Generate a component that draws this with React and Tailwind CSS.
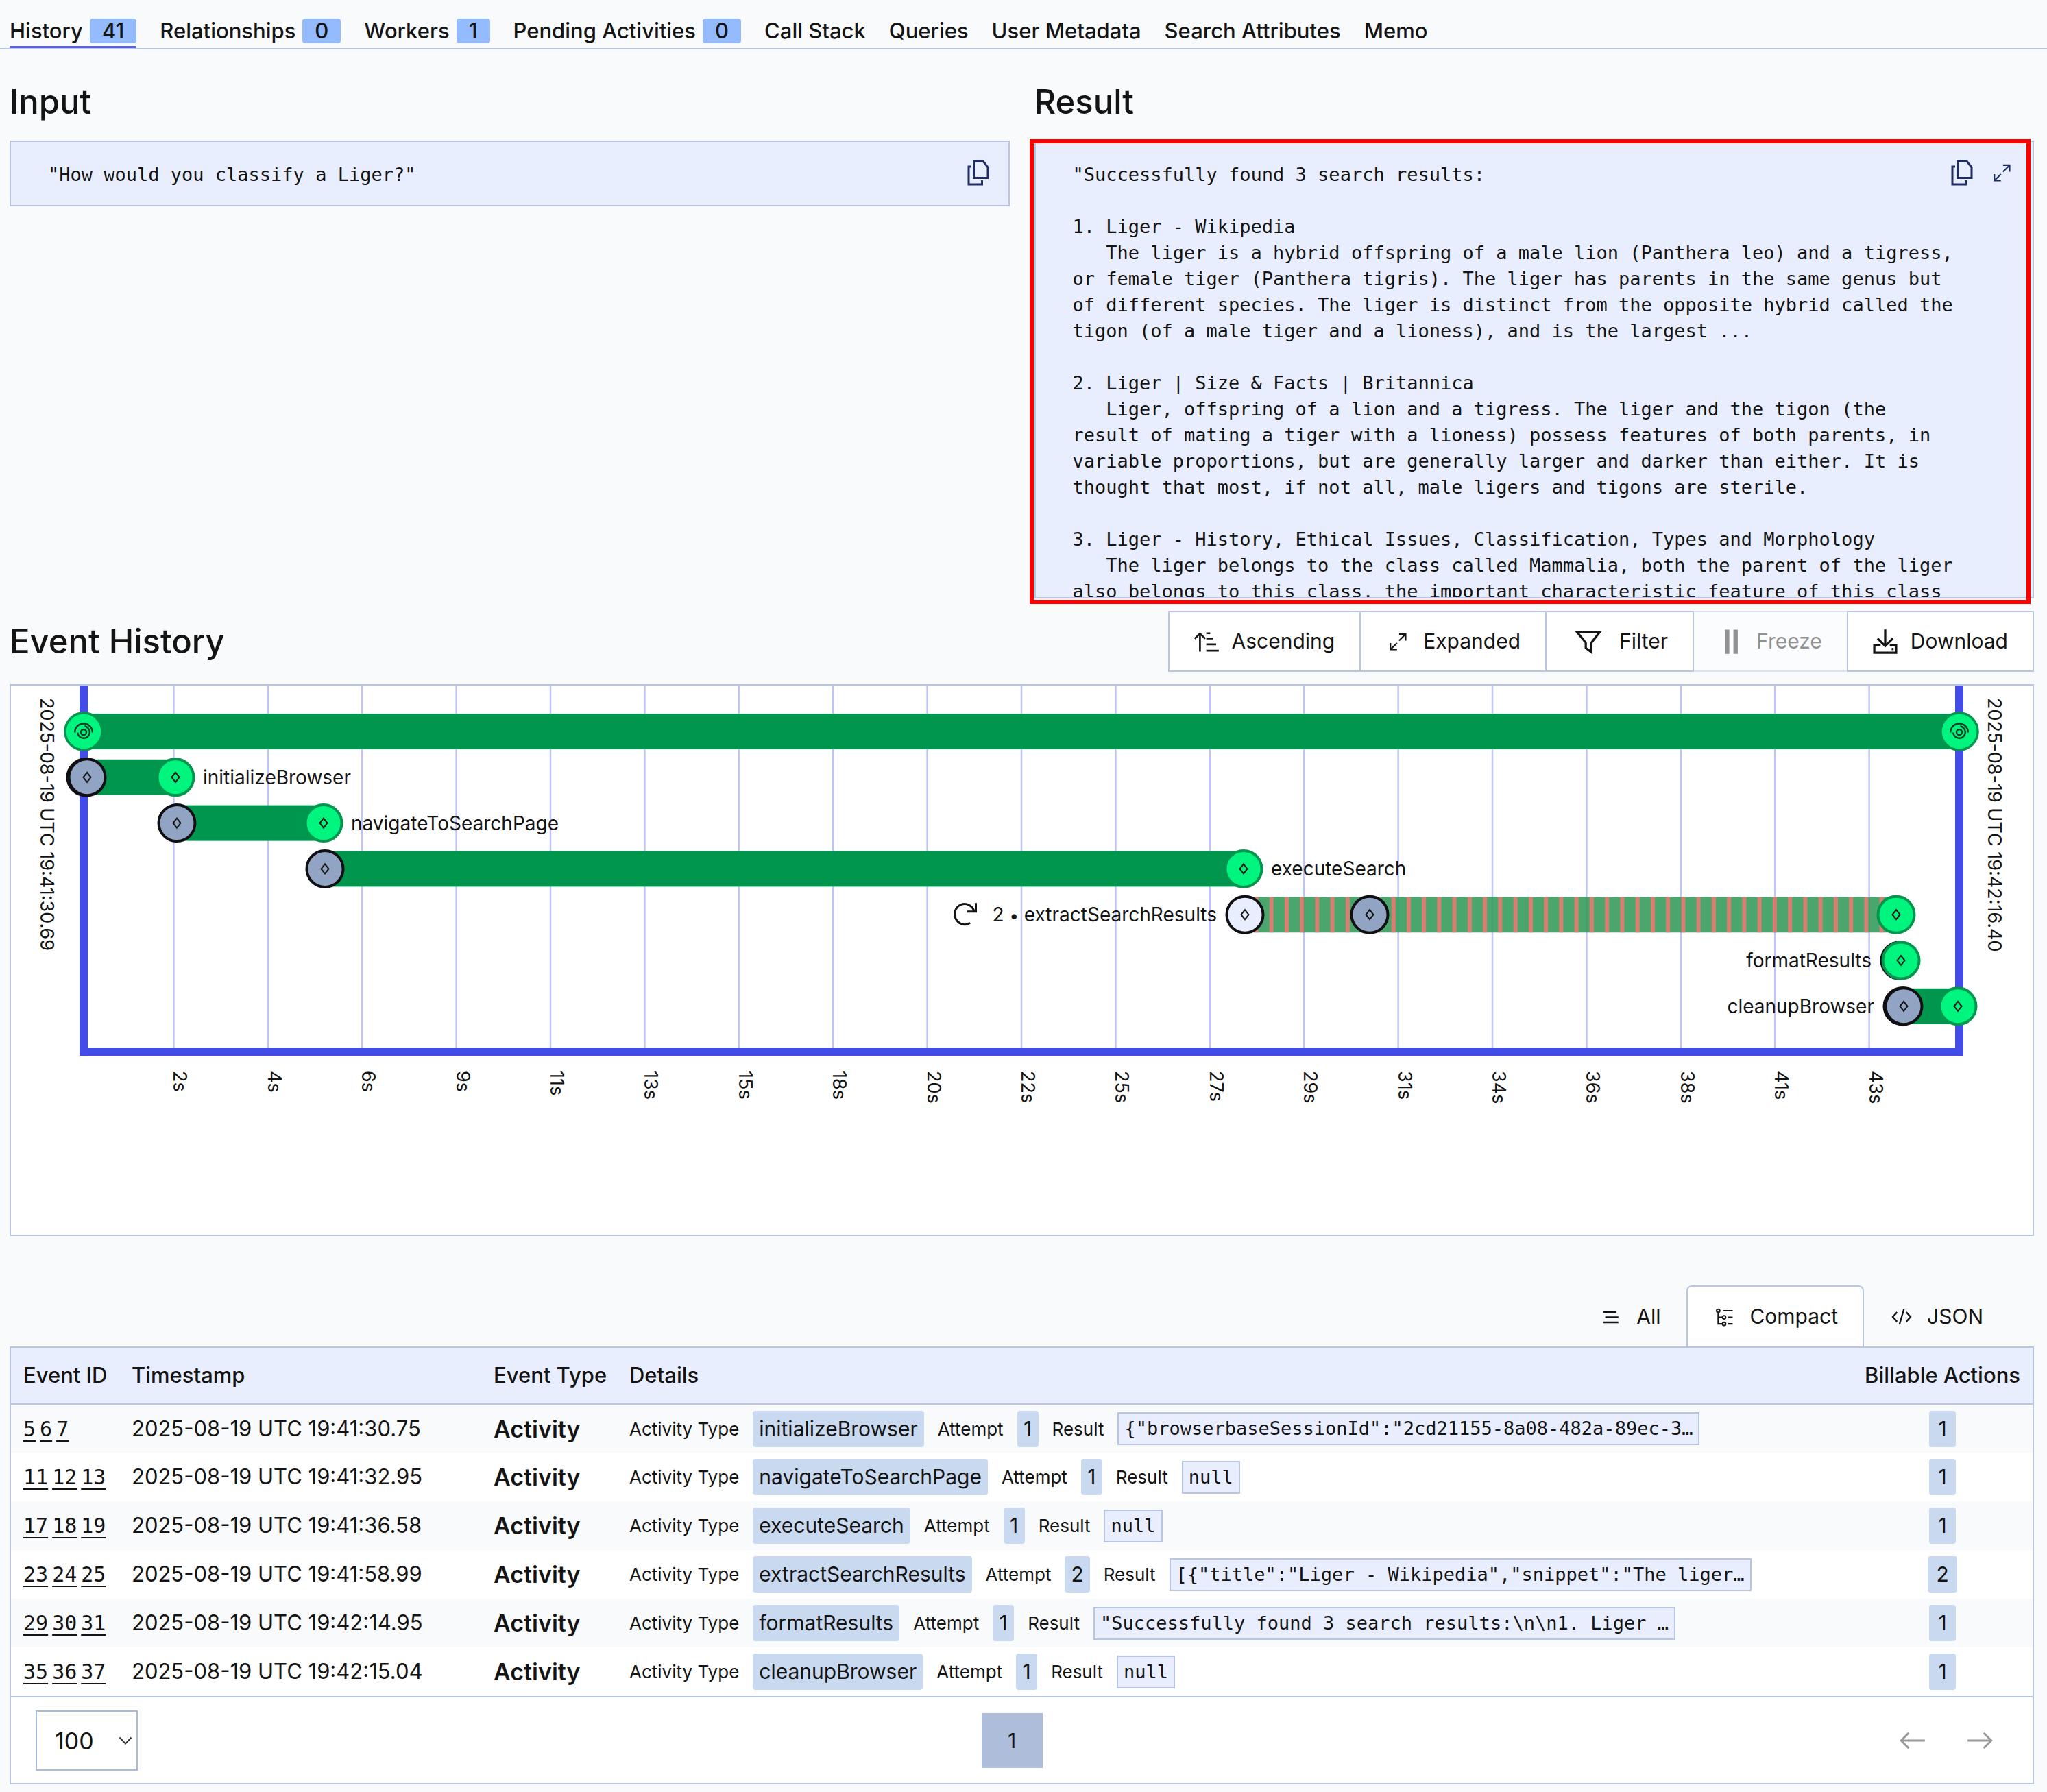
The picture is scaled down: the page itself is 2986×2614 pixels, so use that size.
import { useState } from 'react';
import clsx from 'clsx';

const tabs = [
  { label: 'History', count: 41 },
  { label: 'Relationships', count: 0 },
  { label: 'Workers', count: 1 },
  { label: 'Pending Activities', count: 0 },
  { label: 'Call Stack' },
  { label: 'Queries' },
  { label: 'User Metadata' },
  { label: 'Search Attributes' },
  { label: 'Memo' },
];

const resultText = `"Successfully found 3 search results:

1. Liger - Wikipedia
   The liger is a hybrid offspring of a male lion (Panthera leo) and a tigress,
or female tiger (Panthera tigris). The liger has parents in the same genus but
of different species. The liger is distinct from the opposite hybrid called the
tigon (of a male tiger and a lioness), and is the largest ...

2. Liger | Size & Facts | Britannica
   Liger, offspring of a lion and a tigress. The liger and the tigon (the
result of mating a tiger with a lioness) possess features of both parents, in
variable proportions, but are generally larger and darker than either. It is
thought that most, if not all, male ligers and tigons are sterile.

3. Liger - History, Ethical Issues, Classification, Types and Morphology
   The liger belongs to the class called Mammalia, both the parent of the liger
also belongs to this class, the important characteristic feature of this class`;

const events = [
  { ids: [5, 6, 7], time: '2025-08-19 UTC 19:41:30.75', name: 'initializeBrowser', attempt: 1, result: '{"browserbaseSessionId":"2cd21155-8a08-482a-89ec-3…', billable: 1 },
  { ids: [11, 12, 13], time: '2025-08-19 UTC 19:41:32.95', name: 'navigateToSearchPage', attempt: 1, result: 'null', billable: 1 },
  { ids: [17, 18, 19], time: '2025-08-19 UTC 19:41:36.58', name: 'executeSearch', attempt: 1, result: 'null', billable: 1 },
  { ids: [23, 24, 25], time: '2025-08-19 UTC 19:41:58.99', name: 'extractSearchResults', attempt: 2, result: '[{"title":"Liger - Wikipedia","snippet":"The liger…', billable: 2 },
  { ids: [29, 30, 31], time: '2025-08-19 UTC 19:42:14.95', name: 'formatResults', attempt: 1, result: '"Successfully found 3 search results:\\n\\n1. Liger …', billable: 1 },
  { ids: [35, 36, 37], time: '2025-08-19 UTC 19:42:15.04', name: 'cleanupBrowser', attempt: 1, result: 'null', billable: 1 },
];

const ticks = ['2s', '4s', '6s', '9s', '11s', '13s', '15s', '18s', '20s', '22s', '25s', '27s', '29s', '31s', '34s', '36s', '38s', '41s', '43s'];

const Icon = ({ children, className, strokeWidth = 1.5 }) => (
  <svg
    viewBox="0 0 24 24"
    fill="none"
    stroke="currentColor"
    strokeWidth={strokeWidth}
    className={clsx('h-[46px] w-[46px] shrink-0', className)}
    aria-hidden="true"
  >
    {children}
  </svg>
);

const CopyIcon = () => (
  <svg viewBox="0 0 32 38" fill="none" stroke="currentColor" strokeWidth="3" className="h-[38px] w-[32px]" aria-hidden="true">
    <path d="M9.5 2H23l7 9v15.500H9.500z" />
    <path d="M6 10H2v26h19.500v-6" />
  </svg>
);

const ExpandIcon = () => (
  <Icon strokeWidth={1.1}>
    <path d="M13 6.200h5v5M18 6.200l-5 5M6.400 13v5h5M6.400 18l5-5" />
  </Icon>
);

const AscendingIcon = () => (
  <Icon strokeWidth={1.4}>
    <path d="M7 19.500V5.800M3 9.800l4-4 4 4" />
    <path d="M11.800 5.600h3M11.800 9.600h5.200M11.800 14h7.500M11.800 18.800h9.500" />
  </Icon>
);

const FilterIcon = () => (
  <Icon strokeWidth={1.7}>
    <path d="M3.200 4.500h17.600l-6.500 8.300v7.200L10 16.800v-4z" />
  </Icon>
);

const PauseIcon = () => (
  <Icon strokeWidth={3.3}>
    <path d="M9.100 2.900v18.400M15.500 2.900v18.400" />
  </Icon>
);

const DownloadIcon = () => (
  <Icon strokeWidth={1.7}>
    <path d="M12 2.700v12.500M6.200 9.600l5.800 5.700 5.800-5.700" />
    <path d="M8.500 14.800H3.700v5.600h16.600v-5.600h-4.800" />
    <path d="M16.900 17.600h1.500" />
  </Icon>
);

const ListIcon = () => (
  <Icon strokeWidth={1.3}>
    <path d="M6.200 8.200h9.800M7.600 12.200h10M6.200 16.200h11.400" />
  </Icon>
);

const TreeIcon = () => (
  <Icon strokeWidth={1.1}>
    <circle cx="7.500" cy="7.300" r="1.200" />
    <circle cx="12" cy="12.300" r="1.200" />
    <circle cx="12" cy="17.300" r="1.200" />
    <path d="M7.500 8.500v8.800h3.300M7.500 12.300h3.300M11.300 7.300h7.200M15 12.300h3.500M15 17.300h3.500" />
  </Icon>
);

const CodeIcon = () => (
  <Icon strokeWidth={1.2}>
    <path d="M8.500 8.400 5.200 12l3.300 3.600M15.500 8.400l3.300 3.600-3.300 3.600M13.700 6.200l-3.400 11.600" />
  </Icon>
);

const CountBadge = ({ children }) => (
  <span className="inline-flex h-9 items-center rounded-[4px] bg-[#93bbfd] px-[18px]">{children}</span>
);

const ValueBadge = ({ children, className = 'min-w-[31px] px-[9px]' }) => (
  <span className={clsx('inline-flex h-[53px] items-center justify-center rounded-[4px] bg-[#c9d9f0] text-[30px]', className)}>
    {children}
  </span>
);

const TabBar = () => {
  const [active, setActive] = useState('History');

  return (
    <nav className="border-b-2 border-[#b8c6e2] pt-[27px] pl-[14px]">
      <div className="flex gap-[34px] text-[31px] font-medium">
        {tabs.map((tab) => (
          <button
            key={tab.label}
            type="button"
            onClick={() => setActive(tab.label)}
            className={clsx(
              'flex items-center gap-[10px] border-b-[3px] pb-1 leading-9',
              active === tab.label ? 'border-[#5b63e6]' : 'border-transparent'
            )}
          >
            {tab.label}
            {tab.count !== undefined && <CountBadge>{tab.count}</CountBadge>}
          </button>
        ))}
      </div>
    </nav>
  );
};

const CodePanel = ({ title, text, expandable = false, highlighted = false }) => (
  <section className="min-w-0">
    <h2 className="mb-[25px] text-[49px] leading-[62px] font-medium">{title}</h2>
    <div className="relative">
      <div className="relative max-h-[668px] overflow-hidden border-2 border-[#b8c6e2] bg-[#e8eefe] px-[54px] pt-[29px] pb-[25px]">
        <pre className="font-[DejaVu_Sans_Mono,monospace] text-[27px] leading-[38px]">{text}</pre>
        <div
          className={clsx(
            'absolute top-[26px] flex h-[38px] items-center gap-[7px] text-[#1e2d66]',
            expandable ? 'right-[22px]' : 'right-4'
          )}
        >
          <button type="button" aria-label={`Copy ${title}`} className="px-3">
            <CopyIcon />
          </button>
          {expandable && (
            <button type="button" aria-label={`Expand ${title}`}>
              <ExpandIcon />
            </button>
          )}
        </div>
      </div>
      {highlighted && (
        <div className="pointer-events-none absolute -top-[2px] right-[5px] -bottom-[8px] -left-[7px] border-[6px] border-[#ff0000]" />
      )}
    </div>
  </section>
);

const toolButton = 'flex h-[89px] items-center gap-[14px] border-2 border-[#b8c6e2] bg-white pr-9';

const Toolbar = () => (
  <div className="flex">
    <button type="button" className={clsx(toolButton, 'pl-[31px]')}>
      <AscendingIcon />
      Ascending
    </button>
    <button type="button" className={clsx(toolButton, '-ml-[2px] pl-[31px]')}>
      <ExpandIcon />
      Expanded
    </button>
    <button type="button" className={clsx(toolButton, '-ml-[2px] pl-[38px]')}>
      <FilterIcon />
      <span className="pl-2">Filter</span>
    </button>
    <button type="button" disabled className={clsx(toolButton, 'border-x-0 pl-[31px] opacity-45')}>
      <PauseIcon />
      Freeze
    </button>
    <button type="button" className={clsx(toolButton, 'pl-[31px]')}>
      <DownloadIcon />
      Download
    </button>
  </div>
);

const Diamond = ({ x, y }) => (
  <path d={`M${x} ${y - 7}l5.500 7-5.500 7-5.500-7z`} fill="none" stroke="#141414" strokeWidth="2" />
);

const Dot = ({ x, y, kind = 'done' }) => {
  const colors = {
    done: { fill: '#00f57f', stroke: '#00964e' },
    started: { fill: '#92a4c3', stroke: '#0f0f14' },
    scheduled: { fill: '#e8eefe', stroke: '#0f0f14' },
  }[kind];

  return (
    <g>
      <circle cx={x} cy={y} r="26.500" fill={colors.fill} stroke={colors.stroke} strokeWidth="4" />
      <Diamond x={x} y={y} />
    </g>
  );
};

const WorkflowDot = ({ x, y }) => (
  <g>
    <circle cx={x} cy={y} r="27" fill="#00f57f" stroke="#00964e" strokeWidth="3.500" />
    <g transform={`translate(${x} ${y})`} fill="none" stroke="#0a3d22" strokeWidth="2.400">
      <circle cx="0" cy="1" r="4" />
      <path d="M-12.800 1.500C-12.800 -6 -7 -11.500 0 -11.500S12.800 -6 12.800 1.500" />
      <path d="M-8.800 1.500A8.800 8.800 0 1 0 1.500 -7.700" />
    </g>
  </g>
);

const Bar = ({ from, to, y }) => (
  <rect x={from} y={y - 26} width={to - from} height="52" fill="#00964e" />
);

const rowY = (i) => 67 + i * 66.8;

const Timeline = () => (
  <div className="mt-[18px] border-2 border-[#b8c6e2] bg-white">
    <svg viewBox="0 0 2949 801" className="h-auto w-full font-[Inter,sans-serif] text-[28px]" fill="#141414" role="img" aria-label="Event timeline">
      {ticks.map((tick, i) => {
        const x = 100 + (i + 1) * 137.4;
        return (
          <g key={tick}>
            <line x1={x} x2={x} y1="0" y2="528" stroke="#c0c3f8" strokeWidth="2.500" />
            <text transform={`translate(${x} 562) rotate(90)`} className="text-[27px]">{tick}</text>
          </g>
        );
      })}
      <path d="M106 0V534H2842V0" fill="none" stroke="#444ce7" strokeWidth="12" />
      <text transform="translate(43 18) rotate(90)" className="text-[27px]">2025-08-19 UTC 19:41:30.69</text>
      <text transform="translate(2884 18) rotate(90)" className="text-[27px]">2025-08-19 UTC 19:42:16.40</text>

      <Bar from={106} to={2842} y={rowY(0)} />
      <WorkflowDot x={106} y={rowY(0)} />
      <WorkflowDot x={2842} y={rowY(0)} />

      <Bar from={111} to={240} y={rowY(1)} />
      <Dot x={109} y={rowY(1)} kind="started" />
      <Dot x={111} y={rowY(1)} kind="started" />
      <Dot x={240} y={rowY(1)} />
      <text x="280" y={rowY(1) + 10}>initializeBrowser</text>

      <Bar from={242} to={456} y={rowY(2)} />
      <Dot x={242} y={rowY(2)} kind="started" />
      <Dot x={456} y={rowY(2)} />
      <text x="496" y={rowY(2) + 10}>navigateToSearchPage</text>

      <Bar from={458} to={1798} y={rowY(3)} />
      <Dot x={458} y={rowY(3)} kind="started" />
      <Dot x={1798} y={rowY(3)} />
      <text x="1838" y={rowY(3) + 10}>executeSearch</text>

      {/* retried activity */}
      <g opacity="0.9" fill="none" strokeWidth="52">
        <line x1="1800" x2="2750" y1={rowY(4)} y2={rowY(4)} stroke="#379d5e" />
        <line x1="1813.400" x2="2750" y1={rowY(4)} y2={rowY(4)} stroke="#d57263" strokeDasharray="6 16.25" />
      </g>
      <Dot x={1800} y={rowY(4)} kind="scheduled" />
      <Dot x={1982} y={rowY(4)} kind="started" />
      <Dot x={2750} y={rowY(4)} />
      <path
        d={`M1405 ${rowY(4) - 5}A14.500 15 0 1 0 1399 ${rowY(4) + 12}M1407.500 ${rowY(4) - 17}V${rowY(4) - 4.5}H1395`}
        fill="none"
        stroke="#141414"
        strokeWidth="3"
      />
      <text x="1759" y={rowY(4) + 10} textAnchor="end">
        2 <tspan className="text-[24px]">•</tspan> extractSearchResults
      </text>

      <Dot x={2755} y={rowY(5)} kind="started" />
      <Dot x={2757} y={rowY(5)} />
      <text x="2714" y={rowY(5) + 10} textAnchor="end">formatResults</text>

      <Bar from={2761} to={2840} y={rowY(6)} />
      <Dot x={2759} y={rowY(6)} kind="started" />
      <Dot x={2761} y={rowY(6)} kind="started" />
      <Dot x={2840} y={rowY(6)} />
      <text x="2718" y={rowY(6) + 10} textAnchor="end">cleanupBrowser</text>
    </svg>
  </div>
);

const ViewTabs = () => {
  const [view, setView] = useState('Compact');
  const views = [
    { label: 'All', icon: <ListIcon /> },
    { label: 'Compact', icon: <TreeIcon /> },
    { label: 'JSON', icon: <CodeIcon /> },
  ];

  return (
    <div className="mt-[72px] flex justify-end pr-9">
      {views.map(({ label, icon }) => (
        <button
          key={label}
          type="button"
          onClick={() => setView(label)}
          className={clsx(
            'flex h-[89px] items-center gap-[14px] rounded-t-lg border-2 border-b-0 pr-9 pl-[30px]',
            view === label ? 'border-[#b8c6e2] bg-white' : 'border-transparent'
          )}
        >
          {icon}
          {label}
        </button>
      ))}
    </div>
  );
};

const EventTable = () => (
  <div className="border-2 border-[#b8c6e2] bg-white">
    <table className="w-full border-collapse text-left whitespace-nowrap">
      <thead className="text-[31px]">
        <tr className="h-[82px] border-b-2 border-[#b8c6e2] bg-[#e8eefe]">
          <th className="w-[158px] pl-[18px] font-medium">Event ID</th>
          <th className="w-[528px] pl-[18px] font-medium">Timestamp</th>
          <th className="w-[198px] pl-[18px] font-medium">Event Type</th>
          <th className="pl-[18px] font-medium">Details</th>
          <th className="w-[260px] px-[18px] text-center font-medium">Billable Actions</th>
        </tr>
      </thead>
      <tbody>
        {events.map((event) => (
          <tr key={event.time} className="h-[71px] odd:bg-[#f9fafc]">
            <td className="pl-[18px]">
              <div className="flex gap-[6px] font-[DejaVu_Sans_Mono,monospace]">
                {event.ids.map((id) => (
                  <a key={id} href={`#event-${id}`} className="underline decoration-2 underline-offset-[6px]">
                    {id}
                  </a>
                ))}
              </div>
            </td>
            <td className="pl-[18px] text-[31px]">{event.time}</td>
            <td className="pl-[18px] text-[34px] font-semibold">Activity</td>
            <td className="pl-[18px]">
              <div className="flex items-center gap-5 text-[26px]">
                <span>Activity Type</span>
                <ValueBadge>{event.name}</ValueBadge>
                <span>Attempt</span>
                <ValueBadge>{event.attempt}</ValueBadge>
                <span>Result</span>
                <code className="border-2 border-[#b8c6e2] bg-[#e8eefe] px-2 font-[DejaVu_Sans_Mono,monospace] text-[27px] leading-[44px]">
                  {event.result}
                </code>
              </div>
            </td>
            <td className="px-[18px] text-center">
              <ValueBadge className="min-w-[39px] px-3">{event.billable}</ValueBadge>
            </td>
          </tr>
        ))}
      </tbody>
    </table>

    <div className="flex items-center justify-between border-t-2 border-[#b8c6e2] pt-[19px] pr-[38px] pb-[18px] pl-9">
      <div className="relative">
        <select
          aria-label="Rows per page"
          defaultValue="100"
          className="h-[88px] w-[149px] appearance-none border-2 border-[#a9bbde] bg-white pl-[26px] text-[34px]"
        >
          <option value="100">100</option>
          <option value="250">250</option>
          <option value="500">500</option>
        </select>
        <svg viewBox="0 0 20 12" fill="none" stroke="#333" strokeWidth="2" className="pointer-events-none absolute top-[38px] right-2 h-3 w-5" aria-hidden="true">
          <path d="m1.500 1.500 8.500 9 8.500-9" />
        </svg>
      </div>
      <button type="button" aria-current="page" className="h-20 w-[89px] bg-[#aebdd9]">1</button>
      <div className="flex gap-5 text-[#999]">
        <button type="button" aria-label="Previous page" className="px-4">
          <Icon><path d="M21.300 12H3.500M9 6.200 3.200 12 9 17.800" /></Icon>
        </button>
        <button type="button" aria-label="Next page" className="px-4">
          <Icon><path d="M2.700 12h17.800M15 6.200l5.800 5.800-5.800 5.800" /></Icon>
        </button>
      </div>
    </div>
  </div>
);

export default function App() {
  return (
    <div className="min-h-screen bg-[#f9fafc] font-[Inter,sans-serif] text-[30px] text-[#141414]">
      <TabBar />
      <main className="pr-[19px] pb-3 pl-[14px]">
        <div className="grid grid-cols-2 items-start gap-9 pt-[46px]">
          <CodePanel title="Input" text={'"How would you classify a Liger?"'} />
          <CodePanel title="Result" text={resultText} expandable highlighted />
        </div>
        <div className="mt-[18px] flex items-center justify-between">
          <h2 className="text-[49px] leading-[62px] font-medium">Event History</h2>
          <Toolbar />
        </div>
        <Timeline />
        <ViewTabs />
        <EventTable />
      </main>
    </div>
  );
}
